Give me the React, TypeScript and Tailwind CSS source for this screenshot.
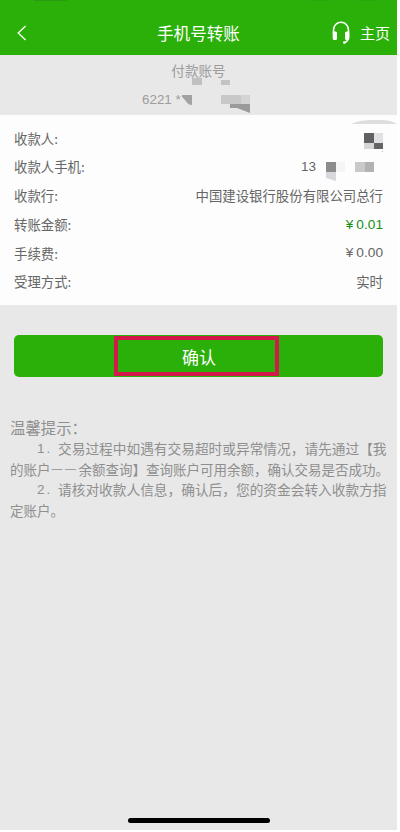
import { ReactNode } from 'react';

type Row = {
  label: string;
  value: ReactNode;
};

const rows: Row[] = [
  { label: '收款人:', value: <MaskedName /> },
  { label: '收款人手机:', value: <MaskedPhone /> },
  { label: '收款行:', value: '中国建设银行股份有限公司总行' },
  { label: '转账金额:', value: <Amount value="0.01" className="text-[#178f16]" /> },
  { label: '手续费:', value: <Amount value="0.00" className="text-[#666666]" /> },
  { label: '受理方式:', value: '实时' },
];

function Amount({ value, className }: { value: string; className: string }) {
  return (
    <span className={`flex items-baseline gap-[3px] pt-[2px] font-['Liberation_Sans'] text-[13.7px] ${className}`}>
      <span>¥</span>
      <span>{value}</span>
    </span>
  );
}

function MaskedName() {
  return (
    <svg width="20" height="20" viewBox="0 0 20 20" className="relative left-px top-[4px]" shapeRendering="crispEdges">
      <path fill="#616161" d="M0 1h10v10H0z" />
      <path fill="#e1e1e3" d="M10 1h9v10h-9z" />
      <path fill="#d6d6da" d="M0 11h10v6H0z" />
      <path fill="#646464" d="M10 11h9v6h-9z" />
      <path fill="#bbb" d="M18 19h1v1h-1z" />
    </svg>
  );
}

function MaskedPhone() {
  return (
    <span className="flex items-center gap-[10px] pr-2">
      <span className="pt-px font-['Liberation_Sans'] text-[13.5px]">13</span>
      <svg width="49" height="19" viewBox="0 0 49 19" className="relative top-[5px]">
        <path fill="#8c8c8c" d="M0 0h10v10H0z" />
        <path fill="#f5f5f5" d="M10 0h9v10h-9z" />
        <path fill="#d7d7dc" d="M0 10h10v9l-10-3z" />
        <path fill="#c9c9c9" d="M29 0h10v10H29z" />
        <path fill="#b2b2b2" d="M39 0h9v10h-9z" />
      </svg>
    </span>
  );
}

function Header() {
  return (
    <header className="relative flex h-[55px] items-end justify-center bg-[#2bb009] text-white">
      {/* bottoms of the status bar glyphs */}
      <div className="absolute inset-x-0 top-0 flex justify-between pl-[34px] pr-[20px]">
        <span className="h-px w-[33px] bg-[#2d8c19]/60" />
        <span className="flex gap-[30px]">
          <span className="h-px w-[18px] bg-[#2d9b17]/60" />
          <span className="h-px w-[18px] bg-[#2d9b17]/60" />
        </span>
      </div>
      <div className="flex h-[44px] w-full items-center pl-[17px] pr-[7px]">
        <div className="flex w-[140px] items-center">
          <svg width="10" height="16" viewBox="0 0 10 16" fill="none" stroke="#f4ffed" strokeWidth="1.4">
            <path d="M8.6 1 1.2 8l7.4 7" />
          </svg>
        </div>
        <h1 className="text-[16.6px] leading-6">手机号转账</h1>
        <div className="flex flex-1 items-center justify-end gap-[10px]">
          <svg width="18" height="24" viewBox="0 0 18 24" fill="none">
            <path d="M1.5 13V9.2C1.5 4.5 4.8 1.3 9 1.3s7.5 3.2 7.5 7.9v6.6c0 3.6-1.5 5-4.4 6" stroke="#fff" strokeWidth="1.6" />
            <path d="M.7 12c0-1.200 1-1.500 2.300-1.500 1.300 0 2 .5 2 1.500v5.500c0 1-.7 1.500-2 1.500s-2.300-.4-2.300-1.500z" fill="#fff" />
            <path d="M13 12c0-1 .7-1.500 2-1.500s2.300.3 2.300 1.500v5.500c0 1.100-1 1.500-2.300 1.500s-2-.5-2-1.500z" fill="#fff" />
            <circle cx="12.300" cy="21.600" r="1.300" fill="#fff" />
          </svg>
          <span className="text-[15px] leading-6">主页</span>
        </div>
      </div>
    </header>
  );
}

function Account() {
  return (
    <section className="relative h-[60px] pt-[4px] text-[#9c9c9c]">
      <div className="text-center text-[13.6px] leading-[22px]">付款账号</div>
      <div className="pl-[142px] pt-[9px] font-['Liberation_Sans'] text-[13.4px] leading-[20px]">6221 *</div>
      {/* mosaic over the card number */}
      <svg width="60" height="38" viewBox="0 0 60 38" className="absolute left-[182px] top-[22px]">
        <path fill="#c0c0c0" d="M10 1h10v7H10z" />
        <path fill="#c3c3c3" d="M39 3h9v5h-9z" />
        <path fill="#a2a2a2" d="M0 18h10v10c-5 0-6-5-10-8z" />
      </svg>
      <svg width="30" height="20" viewBox="0 0 30 20" className="absolute left-[221px] top-[40px]">
        <path fill="#c8c8c8" d="M0 0h20v9H0z" />
        <path fill="#d3d3d3" d="M20 0h9v9h-9z" />
        <path fill="#9a9a9a" d="M9 9h20v9l-13-5H9z" />
      </svg>
    </section>
  );
}

function TipNumber({ children }: { children: ReactNode }) {
  return <span className="w-[21px] shrink-0 pt-px font-['Liberation_Sans'] tracking-[2px]">{children}</span>;
}

export default function App() {
  return (
    <div className="h-[832px] w-[400px] bg-white font-['Noto_Sans_CJK_SC',sans-serif] font-normal">
      <main className="flex h-[830px] w-[397px] flex-col bg-[#e8e8e8]">
        <Header />
        <Account />

        <section className="relative flex h-[190px] flex-col bg-[#fdfdfd] px-[14px] pt-[8.500px]">
          <svg width="46" height="4" viewBox="0 0 46 4" className="absolute right-0 top-[5px]">
            <path fill="#dedede" d="M0 4C8 0 18 0 26 0s14 0 20 4z" />
          </svg>
          {rows.map((row) => (
            <div key={row.label} className="flex h-[28.700px] items-center justify-between text-[13.4px] text-[#666666]">
              <span>{row.label}</span>
              <span>{row.value}</span>
            </div>
          ))}
        </section>

        <div className="px-[14px] pt-[30px]">
          <button className="flex h-[42px] w-full items-center justify-center rounded-[5px] bg-[#2bb009] pr-[4px] text-[17px] text-white">
            <span className="flex h-[40px] w-[165px] items-center justify-center border-4 border-[#d3184a] pl-[5px] pt-[2px]">
              确认
            </span>
          </button>
        </div>

        <section className="whitespace-nowrap pl-[10px] pt-[39px] text-[13.500px] leading-[20.700px] text-[#8f8f8f]">
          <h2 className="text-[15.400px] leading-[22px]">温馨提示：</h2>
          <p className="flex h-[20.700px] pl-[27px]">
            <TipNumber>1.</TipNumber>
            <span className="text-[13.700px]">交易过程中如遇有交易超时或异常情况，请先通过【我</span>
          </p>
          <p className="flex h-[20.700px]">
            <span>的账户</span>
            <span className="-mt-px pl-px font-['Liberation_Sans'] text-[11px] tracking-[2.500px]">——</span>
            <span>余额查询】查询账户可用余额，确认交易是否成功。</span>
          </p>
          <p className="flex h-[20.700px] pl-[27px]">
            <TipNumber>2.</TipNumber>
            <span className="text-[13.700px]">请核对收款人信息，确认后，您的资金会转入收款方指</span>
          </p>
          <p className="h-[20.700px]">定账户。</p>
        </section>

        <div className="mt-auto flex justify-center pb-[7px]">
          <div className="h-[5px] w-[142px] rounded-full bg-black" />
        </div>
      </main>
    </div>
  );
}
